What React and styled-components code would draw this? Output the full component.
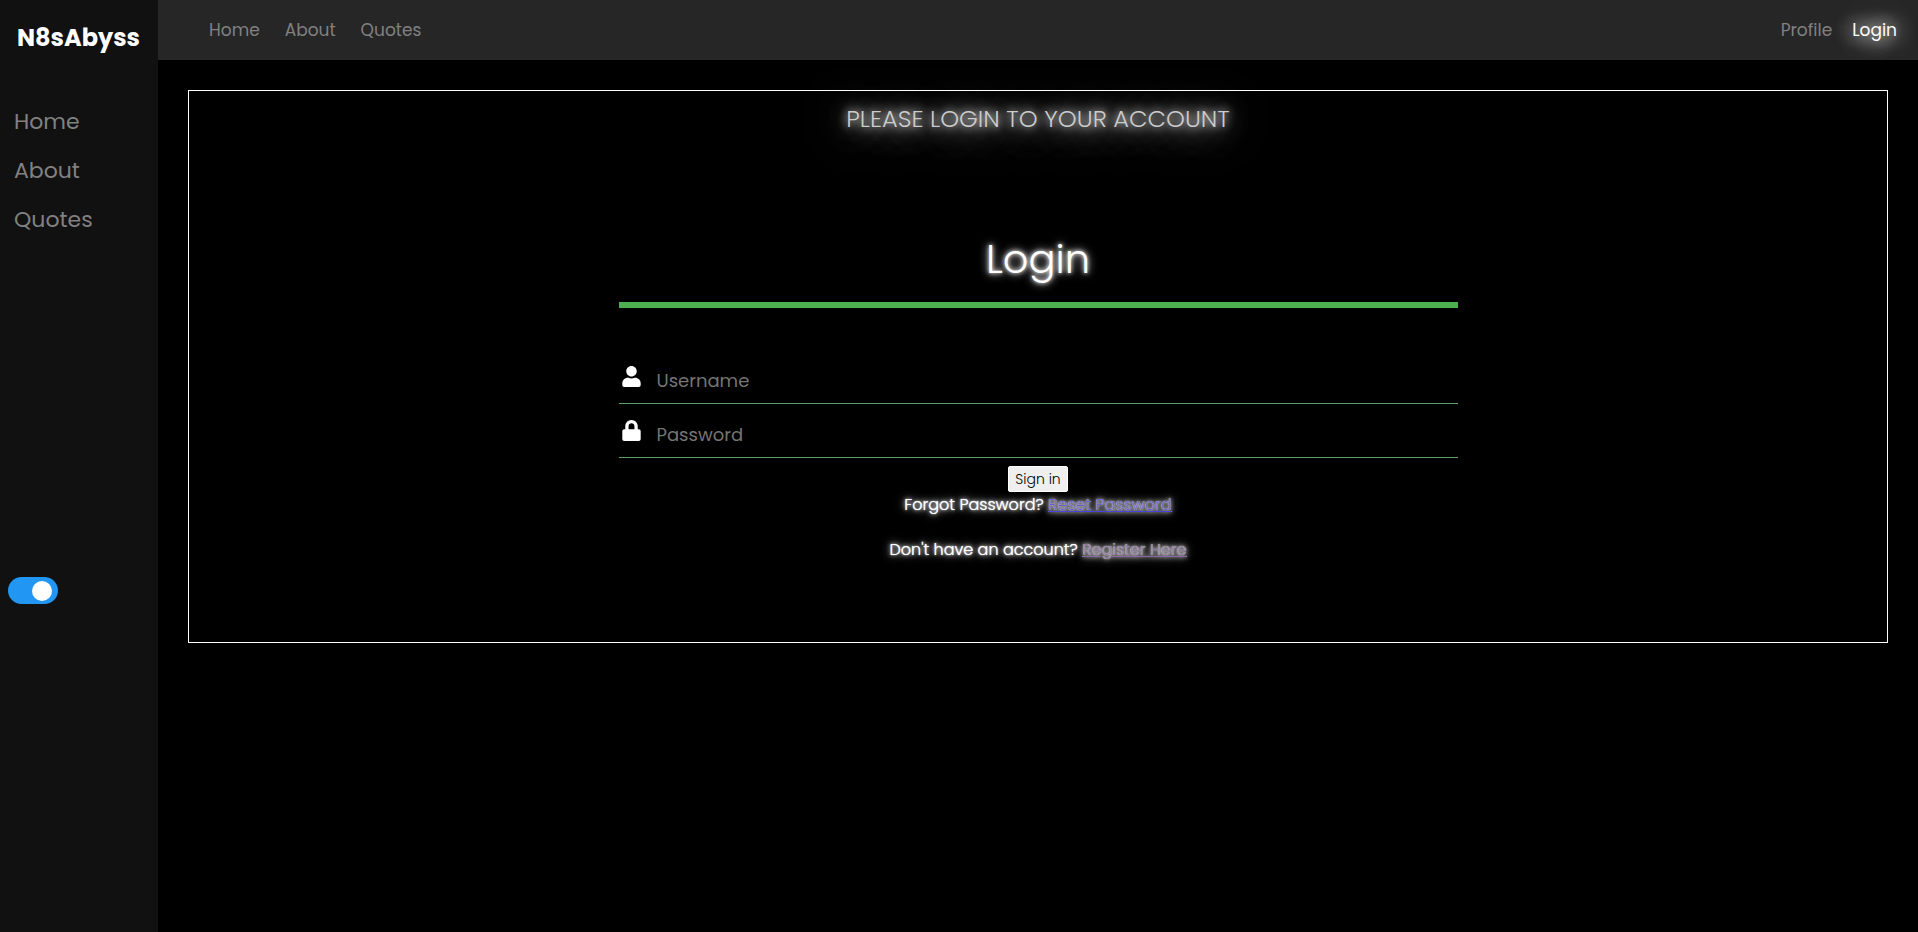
import React from "react";
import styled, { createGlobalStyle } from "styled-components";
import { FaLock, FaUser } from "react-icons/fa";

const GlobalStyle = createGlobalStyle`
  * { box-sizing: border-box; }
  body {
    margin: 0;
    background: #000;
    color: #fff;
    font-family: Poppins, Inter, "Open Sans", sans-serif;
    font-size: 16px;
    line-height: 24px;
  }
`;

const Page = styled.div`
  display: grid;
  grid-template-columns: 158px 1fr;
  min-height: 100vh;
`;

const Sidebar = styled.aside`
  background: #111;
`;

const Brand = styled.h1`
  margin: 0;
  padding: 20px 16px 18px 17px;
  font-size: 24px;
  font-weight: 700;
  line-height: 36px;
`;

const SideNav = styled.nav`
  display: flex;
  flex-direction: column;
  gap: 17px;
  padding: 32px 14px 0;
`;

const SideLink = styled.a`
  color: #818181;
  font-size: 22px;
  line-height: 32px;
  text-decoration: none;
`;

const Toggle = styled.input`
  appearance: none;
  display: flex;
  align-items: center;
  width: 50px;
  height: 27px;
  margin: 341px 0 0 8px;
  border-radius: 14px;
  background: #2196f3;
  cursor: pointer;

  &::before {
    content: "";
    width: 20px;
    height: 20px;
    margin-left: 4px;
    border-radius: 50%;
    background: #fff;
  }

  &:checked::before { margin-left: 24px; }
  &:not(:checked) { background: #ccc; }
`;

const Content = styled.div`
  min-width: 0;
`;

const TopBar = styled.nav`
  display: flex;
  justify-content: space-between;
  align-items: center;
  height: 60px;
  padding: 0 21px 0 51px;
  background: #262626;
  overflow: hidden;
`;

const LinkGroup = styled.div`
  display: flex;
  gap: ${({ $gap }) => $gap}px;
`;

const TopLink = styled.a`
  color: ${({ $active }) => ($active ? "#fff" : "#818181")};
  font-size: 17px;
  text-decoration: none;
  text-shadow: ${({ $active }) =>
    $active ? "0 0 20px #fff, 0 0 20px #fff, 0 0 50px #fff" : "none"};
`;

const Card = styled.main`
  margin: 30px;
  padding-bottom: 59px;
  border: 1px solid #fff;
  text-align: center;
`;

const Notice = styled.p`
  margin: 0;
  padding: 10px 0;
  color: #ccc;
  font-size: 24px;
  font-weight: 300;
  line-height: 36px;
  text-shadow: 0 0 10px #fff, 0 0 20px rgba(255, 255, 255, 0.8), 0 0 50px #fff, 0 10px 40px rgba(255, 255, 255, 0.6);
`;

const Form = styled.form`
  width: calc(50% - 10px);
  margin: 0 auto;
`;

const Title = styled.h2`
  margin: 82px 0 42px;
  padding-bottom: 13px;
  border-bottom: 6px solid #4caf50;
  font-size: 40px;
  font-weight: 300;
  line-height: 60px;
  text-shadow: 0 0 4px #fff, 0 0 10px #fff;
`;

const Field = styled.label`
  display: flex;
  align-items: center;
  gap: 15px;
  height: 54px;
  padding-left: 2px;
  border-bottom: 1px solid #5aa068;
  font-size: 21px;

  svg { flex: none; }
`;

const TextInput = styled.input`
  flex: 1;
  min-width: 0;
  height: 53px;
  padding: 8px 0 0;
  border: 0;
  outline: 0;
  background: none;
  color: #fff;
  font-family: inherit;
  font-size: 18px;

  &::placeholder { color: #757575; }
`;

const SubmitButton = styled.button`
  display: block;
  width: 60px;
  height: 26px;
  margin: 8px auto 1px;
  padding: 0;
  border: 1px solid #fff;
  border-radius: 2px;
  background: #efefef;
  color: #000;
  font-family: inherit;
  font-size: 14px;
  font-weight: 300;
  line-height: 20px;
`;

const Prompt = styled.p`
  margin: 0 0 21px;
  font-size: 16px;
  font-weight: 300;
  text-shadow: 0 0 1px #fff, 0 0 4px #fff, 0 0 10px #fff;
`;

const PromptLink = styled.a`
  color: ${({ $visited }) => ($visited ? "#8f7aa0" : "#6560c8")};
  text-decoration-color: ${({ $visited }) => ($visited ? "#8a68a8" : "#4a44dc")};
`;

export default function App() {
  return (
    <>
      <GlobalStyle />
      <Page>
        <Sidebar>
          <Brand>N8sAbyss</Brand>
          <SideNav aria-label="Sidebar">
            <SideLink href="#home">Home</SideLink>
            <SideLink href="#about">About</SideLink>
            <SideLink href="#quotes">Quotes</SideLink>
          </SideNav>
          <Toggle type="checkbox" defaultChecked aria-label="Dark mode" />
        </Sidebar>
        <Content>
          <TopBar aria-label="Main">
            <LinkGroup $gap={25}>
              <TopLink href="#home">Home</TopLink>
              <TopLink href="#about">About</TopLink>
              <TopLink href="#quotes">Quotes</TopLink>
            </LinkGroup>
            <LinkGroup $gap={20}>
              <TopLink href="#profile">Profile</TopLink>
              <TopLink href="#login" $active>Login</TopLink>
            </LinkGroup>
          </TopBar>
          <Card>
            <Notice>PLEASE LOGIN TO YOUR ACCOUNT</Notice>
            <Form onSubmit={(event) => event.preventDefault()}>
              <Title>Login</Title>
              <Field>
                <FaUser aria-hidden="true" />
                <TextInput type="text" placeholder="Username" aria-label="Username" />
              </Field>
              <Field>
                <FaLock aria-hidden="true" />
                <TextInput type="password" placeholder="Password" aria-label="Password" />
              </Field>
              <SubmitButton type="submit">Sign in</SubmitButton>
              <Prompt>
                Forgot Password? <PromptLink href="#reset">Reset Password</PromptLink>
              </Prompt>
              <Prompt>
                Don't have an account? <PromptLink href="#register" $visited>Register Here</PromptLink>
              </Prompt>
            </Form>
          </Card>
        </Content>
      </Page>
    </>
  );
}
